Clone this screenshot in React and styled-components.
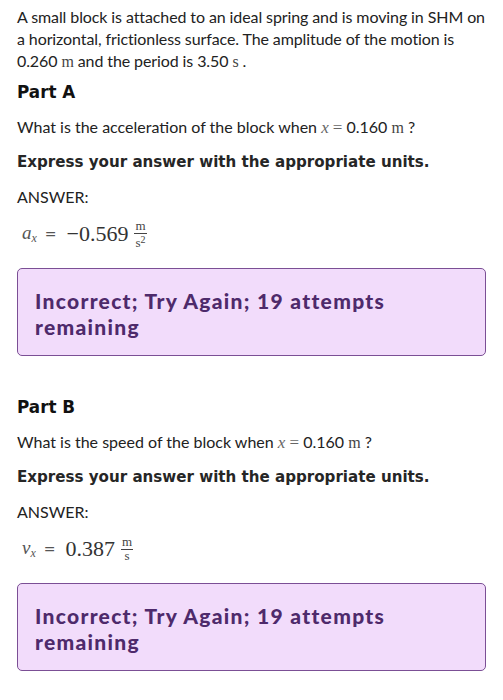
import styled, { createGlobalStyle } from "styled-components";

const GlobalStyle = createGlobalStyle`
  html, body {
    margin: 0;
    padding: 0;
    background: #ffffff;
  }
  body {
    font-family: "Lato", "Open Sans", sans-serif;
    color: #222222;
  }
`;

const PARTS = [
  {
    id: "A",
    question: "What is the acceleration of the block when",
    symbol: "a",
    value: "\u22120.569",
    unitTop: "m",
    unitBottom: "s",
    squared: true,
  },
  {
    id: "B",
    question: "What is the speed of the block when",
    symbol: "v",
    value: "0.387",
    unitTop: "m",
    unitBottom: "s",
    squared: false,
  },
];

export default function App() {
  return (
    <>
      <GlobalStyle />
      <Page>
        <Intro>
          A small block is attached to an ideal spring and is moving in SHM on a
          horizontal, frictionless surface. The amplitude of the motion is 0.260{" "}
          <Unit>m</Unit> and the period is 3.50 <Unit>s</Unit> .
        </Intro>

        {PARTS.map((part) => (
          <Part key={part.id}>
            <PartTitle>Part {part.id}</PartTitle>
            <Question>
              {part.question} <MathVar>x</MathVar> <MathOp>=</MathOp> 0.160{" "}
              <Unit>m</Unit> ?
            </Question>
            <Instruction>Express your answer with the appropriate units.</Instruction>
            <AnswerLabel>ANSWER:</AnswerLabel>
            <AnswerRow>
              <Symbol>
                {part.symbol}
                <sub>x</sub>
              </Symbol>
              <Equals>=</Equals>
              <Value>{part.value}</Value>
              <Fraction>
                <span>{part.unitTop}</span>
                <span>
                  {part.unitBottom}
                  {part.squared && <sup>2</sup>}
                </span>
              </Fraction>
            </AnswerRow>
            <Feedback>Incorrect; Try Again; 19 attempts remaining</Feedback>
          </Part>
        ))}
      </Page>
    </>
  );
}

const Page = styled.div`
  width: 503px;
  height: 700px;
  overflow: hidden;
  box-sizing: border-box;
  padding: 6px 17px 0 17px;
`;

const Intro = styled.p`
  margin: 0;
  font-size: 16px;
  line-height: 22px;
  letter-spacing: -0.1px;
`;

const Unit = styled.span`
  font-family: "Liberation Serif", serif;
  font-size: 16px;
  line-height: 1;
  color: #444;
`;

const MathVar = styled.span`
  font-family: "Liberation Serif", serif;
  font-style: italic;
  font-size: 17px;
  line-height: 1;
  color: #666;
`;

const MathOp = styled.span`
  font-family: "Liberation Serif", serif;
  font-size: 17px;
  line-height: 1;
  color: #666;
`;

const Part = styled.section`
  display: flex;
  flex-direction: column;
  margin-top: 9px;

  & + & {
    margin-top: 40px;
  }
`;

const PartTitle = styled.h2`
  margin: 0;
  font-family: "DejaVu Sans", Verdana, sans-serif;
  font-weight: bold;
  font-size: 16.8px;
  line-height: 22px;
  color: #111;
`;

const Question = styled.p`
  margin: 13px 0 0 0;
  font-size: 16px;
  line-height: 22px;
`;

const Instruction = styled.p`
  margin: 13px 0 0 0;
  font-family: "DejaVu Sans", Verdana, sans-serif;
  font-weight: bold;
  font-size: 15.1px;
  line-height: 22px;
  color: #262626;
`;

const AnswerLabel = styled.p`
  margin: 13px 0 0 0;
  font-size: 16px;
  line-height: 22px;
`;

const AnswerRow = styled.div`
  display: flex;
  align-items: center;
  height: 30px;
  margin-top: 11px;
  padding-left: 5px;
  font-family: "Liberation Serif", serif;
  color: #333;
`;

const Symbol = styled.span`
  font-style: italic;
  font-size: 19px;
  color: #555;

  sub {
    font-size: 12px;
    vertical-align: -3px;
  }
`;

const Equals = styled.span`
  font-family: "DejaVu Sans", sans-serif;
  font-size: 14px;
  margin: 0 10px 0 8px;
  color: #555;
`;

const Value = styled.span`
  font-size: 22px;
  color: #333;
`;

const Fraction = styled.span`
  display: inline-flex;
  flex-direction: column;
  align-items: center;
  margin-left: 6px;
  font-size: 13px;
  line-height: 12px;
  color: #444;

  span:first-child {
    border-bottom: 1px solid #444;
    padding: 0 1px 1px;
  }

  sup {
    font-size: 10px;
    vertical-align: 4px;
  }
`;

const Feedback = styled.div`
  margin-top: 19px;
  box-sizing: border-box;
  height: 88px;
  padding: 19px 90px 0 17px;
  background: #f2dcfb;
  border: 1.5px solid #7b4f95;
  border-radius: 5px;
  font-family: "Lato", sans-serif;
  font-weight: 900;
  font-size: 21px;
  line-height: 26px;
  letter-spacing: 1.3px;
  color: #4e2a6b;
`;
